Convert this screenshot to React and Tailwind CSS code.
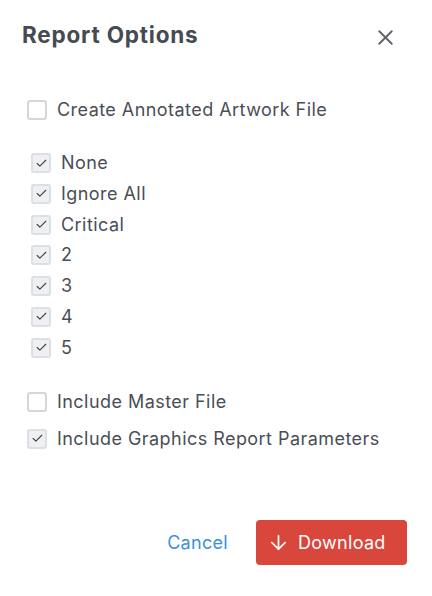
import { X, ArrowDown, Check } from 'lucide-react'

const levels = ['None', 'Ignore All', 'Critical', '2', '3', '4', '5']

function Box({ checked }) {
  if (!checked) {
    return <span className="h-[20px] w-[20px] shrink-0 rounded-[3px] border-2 border-[#d3d7dc] bg-white" />
  }
  return (
    <span className="flex h-[20px] w-[20px] shrink-0 items-center justify-center rounded-[3px] border-2 border-[#dcdfe3] bg-[#eef0f2]">
      <Check className="h-[13px] w-[13px] text-[#3f4349]" strokeWidth={2} />
    </span>
  )
}

function Option({ label, checked }) {
  return (
    <label className="flex items-center gap-[10px]">
      <Box checked={checked} />
      <span className="text-[18px] leading-none tracking-[0.45px] text-[#4a4e55]">{label}</span>
    </label>
  )
}

export default function App() {
  return (
    <div className="flex h-[596px] w-[432px] flex-col bg-white font-['Inter',sans-serif]">
      <div className="flex items-center justify-between pl-[22px] pr-[34px] pt-[19px]">
        <h2 className="text-[22.5px] font-bold leading-[26px] tracking-[0.8px] text-[#464a51]">Report Options</h2>
        <X className="mt-[6px] h-[25px] w-[25px] text-[#5f636a]" strokeWidth={1.8} />
      </div>

      <div className="pl-[27px] pt-[50px]">
        <Option label="Create Annotated Artwork File" checked={false} />
      </div>

      <div className="flex flex-col gap-[10.8px] pl-[31px] pt-[33px]">
        {levels.map((l) => (
          <Option key={l} label={l} checked />
        ))}
      </div>

      <div className="flex flex-col gap-[17px] pl-[27px] pt-[34px]">
        <Option label="Include Master File" checked={false} />
        <Option label="Include Graphics Report Parameters" checked />
      </div>

      <div className="mt-auto mb-[31px] flex items-center justify-end gap-[28px] pr-[25px]">
        <button className="text-[18px] tracking-[0.3px] text-[#3d8fe0]">Cancel</button>
        <button className="flex h-[45px] w-[151px] items-center gap-[8px] rounded-[4px] bg-[#d9463c] pl-[11px] text-[18px] tracking-[0.3px] text-white">
          <ArrowDown className="h-[23px] w-[23px]" strokeWidth={1.8} />
          Download
        </button>
      </div>
    </div>
  )
}
